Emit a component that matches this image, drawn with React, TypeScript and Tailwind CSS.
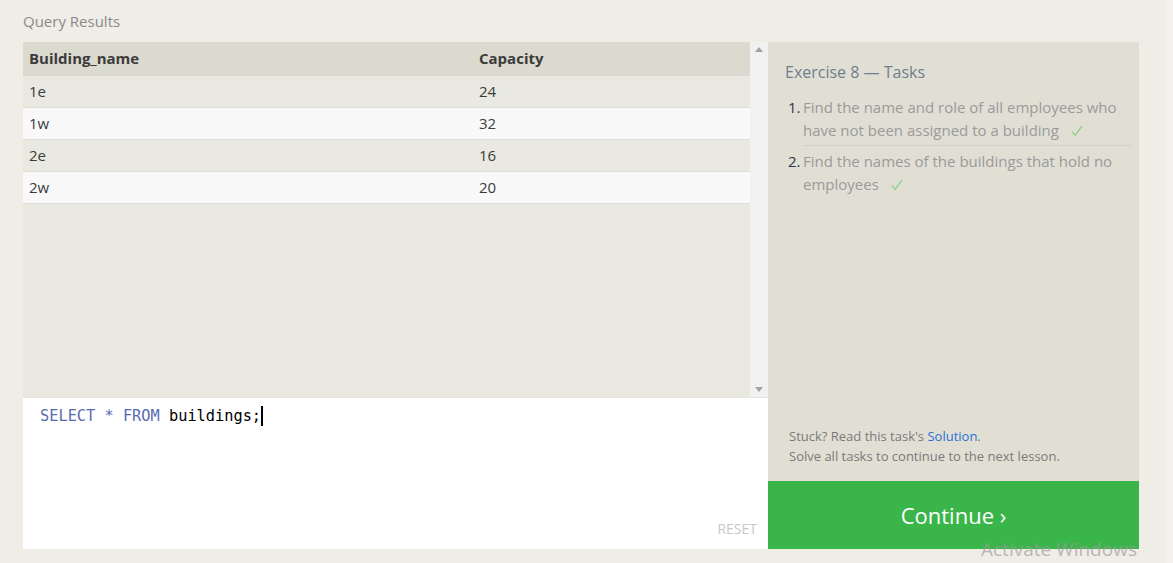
import React from "react";

const rows = [
  ["1e", "24"],
  ["1w", "32"],
  ["2e", "16"],
  ["2w", "20"],
];

function Check() {
  return (
    <svg
      width="12"
      height="12"
      viewBox="0 0 12 12"
      className="inline-block ml-[12px] align-[-1px]"
    >
      <path d="M1 6.5 L4.2 10.5 L11 1" fill="none" stroke="#8fcf8f" strokeWidth="1.3" />
    </svg>
  );
}

export default function App() {
  return (
    <div
      className="relative w-[1173px] h-[563px] bg-[#efede6] overflow-hidden"
      style={{ fontFamily: '"Open Sans", "Noto Sans", sans-serif' }}
    >
      <div className="pl-[23px] pt-[11px] h-[42px] text-[15px] leading-[20px] text-[#8a8a8a]">
        Query Results
      </div>
      <div className="ml-[23px] w-[1116px] h-[507px] flex">
        {/* left */}
        <div className="w-[745px] flex flex-col">
          <div className="h-[355px] flex">
            <div className="w-[727px] bg-[#eae9e1] flex flex-col">
              <div className="h-[34px] shrink-0 bg-[#dbdacf] flex items-center text-[15px] font-bold text-[#3b3b3b] border-b border-[#d9d8cf]">
                <div className="w-[450px] pl-[6px]">Building_name</div>
                <div className="pl-[6px]">Capacity</div>
              </div>
              {rows.map((r, i) => (
                <div
                  key={i}
                  className={
                    "h-[32px] shrink-0 flex items-center text-[15px] text-[#3b3b3b] border-b border-[#dedcd5] " +
                    (i % 2 === 0 ? "bg-[#eae9e1]" : "bg-[#f9f9f9]")
                  }
                >
                  <div className="w-[450px] pl-[6px]">{r[0]}</div>
                  <div className="pl-[6px]">{r[1]}</div>
                </div>
              ))}
            </div>
            <div className="w-[18px] bg-[#f1f1f1] flex flex-col justify-between items-center py-[5px]">
              <svg width="8" height="5" viewBox="0 0 8 5">
                <polygon points="4,0 8,5 0,5" fill="#a3a3a3" />
              </svg>
              <svg width="8" height="5" viewBox="0 0 8 5">
                <polygon points="0,0 8,0 4,5" fill="#a3a3a3" />
              </svg>
            </div>
          </div>
          <div className="flex-1 bg-white relative border-t border-[#e6e4dc]">
            <div
              className="pl-[17px] pt-[7px] text-[15.3px] leading-[22px] flex items-center"
              style={{ fontFamily: '"DejaVu Sans Mono", "Liberation Mono", monospace' }}
            >
              <span className="text-[#5a6bb0]">SELECT</span>
              <span className="whitespace-pre text-[#5a6bb0]"> * </span>
              <span className="text-[#5a6bb0]">FROM</span>
              <span className="whitespace-pre text-black"> buildings;</span>
              <span className="inline-block w-[2px] h-[20px] bg-black"></span>
            </div>
            <div className="absolute right-[11px] bottom-[10px] text-[14px] text-[#c8c8c8]">
              RESET
            </div>
          </div>
        </div>
        {/* right */}
        <div className="flex-1 flex flex-col">
          <div className="flex-1 bg-[#e1dfd4] pl-[17px] pr-[7px] flex flex-col">
            <div className="pt-[19px] text-[16px] leading-[22px] text-[#6f7e8e]">
              Exercise 8 — Tasks
            </div>
            <ol className="mt-[13px] text-[15px] leading-[23px] text-[#9a9a9a]">
              <li className="flex pb-[3px] border-b border-[#d3d1c7] ml-[18px]">
                <span className="w-[15px] shrink-0 -ml-[15px] text-[#2d3550]">1.</span>
                <span>
                  Find the name and role of all employees who have not been assigned to a building
                  <Check />
                </span>
              </li>
              <li className="flex pt-[4px] ml-[18px]">
                <span className="w-[15px] shrink-0 -ml-[15px] text-[#2d3550]">2.</span>
                <span>
                  Find the names of the buildings that hold no employees
                  <Check />
                </span>
              </li>
            </ol>
            <div className="mt-auto pb-[15px] pl-[4px] text-[13px] leading-[20px] text-[#7a7a7a]">
              <div>
                Stuck? Read this task's <span className="text-[#2a6fd6]">Solution</span>.
              </div>
              <div>Solve all tasks to continue to the next lesson.</div>
            </div>
          </div>
          <div className="h-[68px] bg-[#3ab54a] flex items-center justify-center text-white text-[22px]">
            Continue ›
          </div>
        </div>
      </div>
      <div className="absolute left-[1166px] top-0 w-[7px] h-full bg-[#f3f2ee]"></div>
      <div className="absolute left-[981px] top-[536px] text-[19px] text-[#9c9c9c]/70 leading-[26px]">
        Activate Windows
      </div>
    </div>
  );
}
